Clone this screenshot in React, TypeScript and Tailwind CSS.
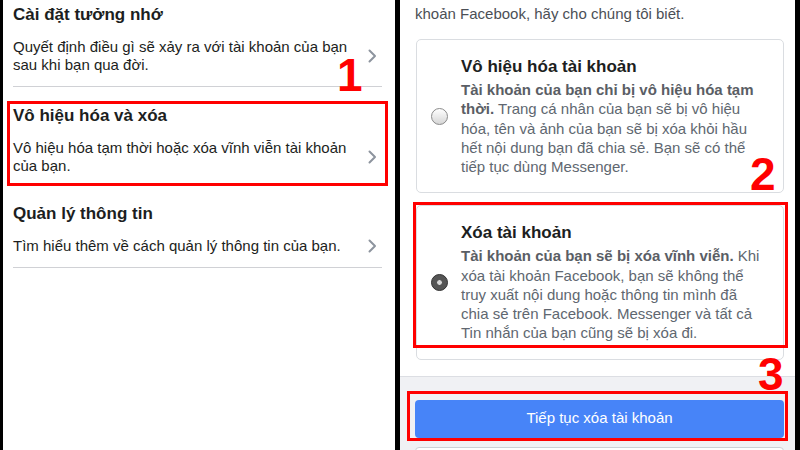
import type { ReactNode } from 'react'

function Chevron() {
  return (
    <svg width="9" height="14" viewBox="0 0 9 14" fill="none" className="shrink-0">
      <path d="M1.5 1.5l5.5 5.5-5.5 5.5" stroke="#8d949e" strokeWidth="2" strokeLinecap="round" strokeLinejoin="round" />
    </svg>
  )
}

function SettingRow({ title, lines }: { title: string; lines: string[] }) {
  return (
    <div>
      <div className="h-[30px] text-[17px] font-bold leading-[30px] text-[#1c1e21]">{title}</div>
      <div className="mt-[8px] flex items-center pr-[5px]">
        <div className="flex-1 text-[15px] leading-[18px] text-[#1c1e21]">
          {lines.map((l) => (
            <div key={l}>{l}</div>
          ))}
        </div>
        <Chevron />
      </div>
    </div>
  )
}

function Radio({ checked }: { checked?: boolean }) {
  if (checked) {
    return (
      <div className="flex h-[17px] w-[17px] items-center justify-center rounded-full border border-[#333] bg-[#555]">
        <div className="h-[7px] w-[7px] rounded-full border border-[#444] bg-[#d8d8d8]" />
      </div>
    )
  }
  return <div className="h-[17px] w-[17px] rounded-full border border-[#8a8a8a] bg-gradient-to-b from-white to-[#d6d6d6]" />
}

function OptionCard({ title, checked, children }: { title: string; checked?: boolean; children: ReactNode }) {
  return (
    <div className="flex items-center rounded-[5px] border border-[#dadde1] bg-white py-[16px]">
      <div className="flex w-[44px] shrink-0 justify-center pl-[1px]">
        <Radio checked={checked} />
      </div>
      <div>
        <div className="h-[22px] text-[17px] font-bold leading-[22px] text-[#1c1e21]">{title}</div>
        <div className="mt-[2px] text-[15px] leading-[19.25px] text-[#606770]">{children}</div>
      </div>
    </div>
  )
}

export default function App() {
  return (
    <div className="relative flex h-[450px] w-[800px] overflow-hidden bg-black font-['Liberation_Sans',Arial,sans-serif]">
      {/* left phone */}
      <div className="ml-[3px] flex w-[392px] flex-col bg-white pl-[10px] pr-[13px]">
        <SettingRow title="Cài đặt tưởng nhớ" lines={['Quyết định điều gì sẽ xảy ra với tài khoản của bạn', 'sau khi bạn qua đời.']} />
        <div className="mt-[12px] h-px bg-[#d0d1d5]" />
        <div className="mt-[14px]">
          <SettingRow title="Vô hiệu hóa và xóa" lines={['Vô hiệu hóa tạm thời hoặc xóa vĩnh viễn tài khoản', 'của bạn.']} />
        </div>
        <div className="mt-[24px]">
          <SettingRow title="Quản lý thông tin" lines={['Tìm hiểu thêm về cách quản lý thông tin của bạn.']} />
        </div>
        <div className="mt-[12px] h-px bg-[#d0d1d5]" />
      </div>

      {/* right phone */}
      <div className="ml-[5px] flex w-[395px] flex-col bg-white">
        <div className="pl-[15px] pr-[12px] pt-[4px] text-[15px] leading-[19px] text-[#4b4f56]">
          khoản Facebook, hãy cho chúng tôi biết.
        </div>
        <div className="mt-[16px] flex flex-col gap-[12px] pl-[16px] pr-[11px]">
          <OptionCard title="Vô hiệu hóa tài khoản">
            <div className="font-bold text-[#5a5e65]">Tài khoản của bạn chỉ bị vô hiệu hóa tạm</div>
            <div>
              <span className="font-bold text-[#5a5e65]">thời.</span> Trang cá nhân của bạn sẽ bị vô hiệu
            </div>
            <div>hóa, tên và ảnh của bạn sẽ bị xóa khỏi hầu</div>
            <div>hết nội dung bạn đã chia sẻ. Bạn sẽ có thể</div>
            <div>tiếp tục dùng Messenger.</div>
          </OptionCard>
          <OptionCard title="Xóa tài khoản" checked>
            <div>
              <span className="font-bold text-[#5a5e65]">Tài khoản của bạn sẽ bị xóa vĩnh viễn.</span> Khi
            </div>
            <div>xóa tài khoản Facebook, bạn sẽ không thể</div>
            <div>truy xuất nội dung hoặc thông tin mình đã</div>
            <div>chia sẻ trên Facebook. Messenger và tất cả</div>
            <div>Tin nhắn của bạn cũng sẽ bị xóa đi.</div>
          </OptionCard>
        </div>
        <div className="mt-[16px] flex flex-1 flex-col gap-[9px] border-t border-[#dcdee3] bg-[#f0f1f4] pl-[15px] pr-[11px] pt-[23px]">
          <button className="h-[38px] rounded-[4px] bg-[#4784f8] text-[15px] text-white">Tiếp tục xóa tài khoản</button>
          <div className="h-[38px] rounded-[4px] border border-[#ccd0d5] bg-white" />
        </div>
      </div>
      <div className="flex-1 bg-black" />

      {/* annotations */}
      <div className="absolute left-[7px] top-[101px] h-[85px] w-[381px] border-[3px] border-[#f00]" />
      <div className="absolute left-[413px] top-[202px] h-[146px] w-[375px] border-[3px] border-[#f00]" />
      <div className="absolute left-[407px] top-[391px] h-[50px] w-[381px] border-[3px] border-[#f00]" />
      <div className="absolute left-[337px] top-[52px] text-[46px] font-bold leading-none text-[#f00]">1</div>
      <div className="absolute left-[750px] top-[151px] text-[46px] font-bold leading-none text-[#f00]">2</div>
      <div className="absolute left-[758px] top-[351px] text-[46px] font-bold leading-none text-[#f00]">3</div>
    </div>
  )
}
